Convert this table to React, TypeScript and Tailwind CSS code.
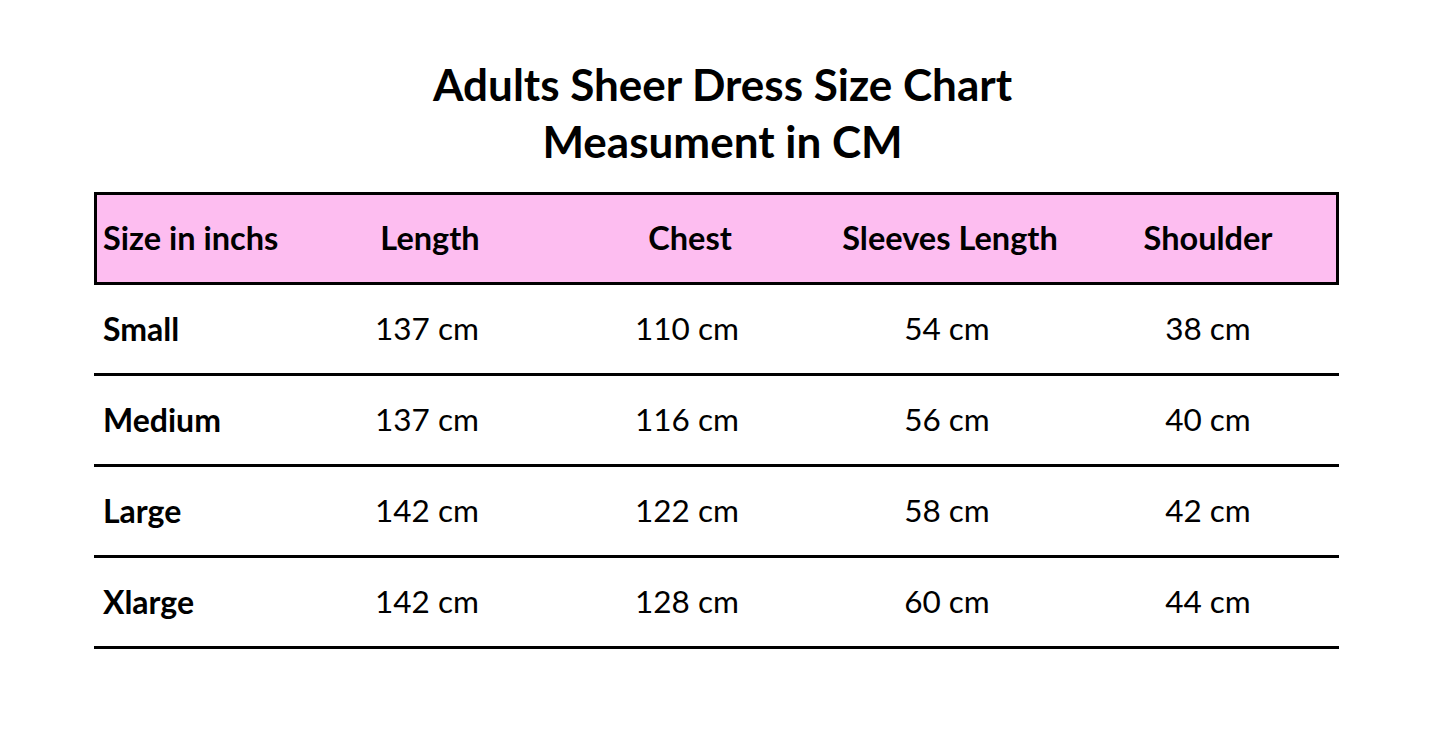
import React from "react";

const rows = [
  ["Small", "137 cm", "110 cm", "54 cm", "38 cm"],
  ["Medium", "137 cm", "116 cm", "56 cm", "40 cm"],
  ["Large", "142 cm", "122 cm", "58 cm", "42 cm"],
  ["Xlarge", "142 cm", "128 cm", "60 cm", "44 cm"],
];

const cols = "grid grid-cols-[203px_260px_260px_260px_1fr] items-center";

export default function App() {
  return (
    <div
      className="w-[1445px] h-[734px] bg-white text-black overflow-hidden"
      style={{ fontFamily: "Lato, 'Open Sans', sans-serif" }}
    >
      <div className="pt-[56px] text-center font-bold text-[44px] leading-[57px]">
        <div>Adults Sheer Dress Size Chart</div>
        <div>Measument in CM</div>
      </div>
      <div className="ml-[94px] w-[1245px] mt-[22px]">
        <div className={`${cols} h-[93px] border-[3px] border-black bg-[#fdbdf0] font-bold text-[32.5px]`}>
          <div className="pl-[6px]">Size in inchs</div>
          <div className="text-center">Length</div>
          <div className="text-center">Chest</div>
          <div className="text-center">Sleeves Length</div>
          <div className="text-center">Shoulder</div>
        </div>
        {rows.map((r) => (
          <div key={r[0]} className={`${cols} h-[91px] border-b-[3px] border-black text-[31.5px]`}>
            <div className="pl-[9px] font-bold text-[32px]">{r[0]}</div>
            <div className="text-center">{r[1]}</div>
            <div className="text-center">{r[2]}</div>
            <div className="text-center">{r[3]}</div>
            <div className="text-center">{r[4]}</div>
          </div>
        ))}
      </div>
    </div>
  );
}
